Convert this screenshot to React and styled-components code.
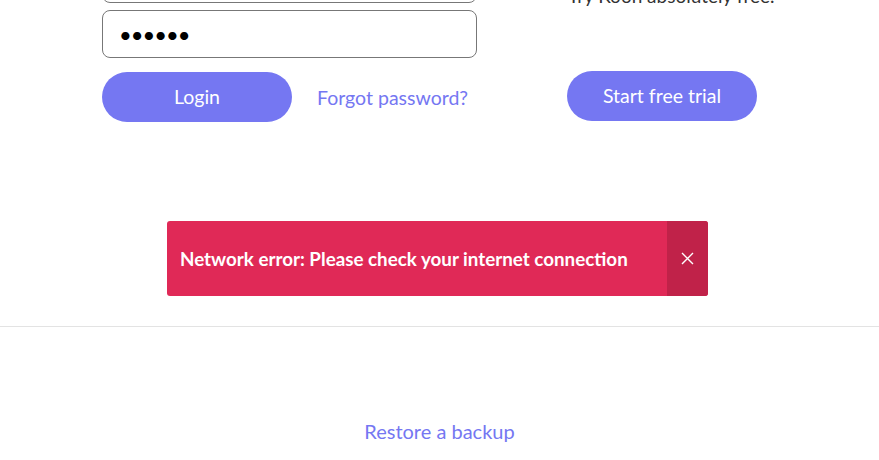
import React from 'react';
import styled, { createGlobalStyle } from 'styled-components';

const GlobalStyle = createGlobalStyle`
  html, body {
    margin: 0;
    padding: 0;
    background: #fff;
    font-family: Lato, "Open Sans", sans-serif;
    overflow: hidden;
  }
`;

const Page = styled.div`
  width: 879px;
  margin-top: -45px;
`;

const Columns = styled.div`
  display: flex;
  padding-left: 102px;
  gap: 90px;
`;

const LoginColumn = styled.div`
  width: 375px;
  display: flex;
  flex-direction: column;
`;

const Input = styled.div`
  box-sizing: border-box;
  height: 48px;
  border: 1px solid #777;
  border-radius: 8px;
  display: flex;
  align-items: center;
  padding-left: 16px;
  margin-bottom: ${(p) => p.$mb || 0}px;
  font-size: 22px;
  letter-spacing: -1px;
  color: #000;
`;

const ButtonRow = styled.div`
  display: flex;
  align-items: center;
  gap: 25px;
`;

const PillButton = styled.button`
  width: 190px;
  height: 50px;
  border: none;
  border-radius: 25px;
  background: #7577f2;
  color: #fff;
  font-family: Lato, sans-serif;
  font-size: 19.5px;
  padding: 0 0 2px;
  cursor: pointer;
`;

const Link = styled.a`
  color: #7577f2;
  font-size: ${(p) => p.$size || 19.5}px;
  text-decoration: none;
`;

const TrialColumn = styled.div`
  display: flex;
  flex-direction: column;
`;

const TrialText = styled.p`
  margin: 27px 0 0 1px;
  font-size: 19px;
  line-height: 28px;
  color: #333;
`;

const TrialButton = styled(PillButton)`
  margin-top: 61px;
`;

const ErrorWrap = styled.div`
  display: flex;
  justify-content: center;
  margin-top: 99px;
  padding-right: 4px;
`;

const ErrorBanner = styled.div`
  width: 541px;
  height: 75px;
  display: flex;
  border-radius: 3px;
  overflow: hidden;
  background: #e02957;
`;

const ErrorText = styled.div`
  flex: 1;
  display: flex;
  align-items: center;
  padding-left: 13px;
  font-size: 18.8px;
  font-weight: 700;
  color: #fff;
  white-space: nowrap;
`;

const CloseButton = styled.div`
  width: 41px;
  background: #c02249;
  display: flex;
  align-items: center;
  justify-content: center;
`;

const Divider = styled.hr`
  margin: 30px 0 0;
  border: none;
  border-top: 1px solid #e3e3e3;
`;

const Footer = styled.div`
  display: flex;
  justify-content: center;
  padding-top: 92px;
`;

export default function App() {
  return (
    <>
      <GlobalStyle />
      <Page>
        <Columns>
          <LoginColumn>
            <Input $mb={7} />
            <Input $mb={14}>••••••</Input>
            <ButtonRow>
              <PillButton>Login</PillButton>
              <Link href="#">Forgot password?</Link>
            </ButtonRow>
          </LoginColumn>
          <TrialColumn>
            <TrialText>Try Kooh absolutely free.</TrialText>
            <TrialButton>Start free trial</TrialButton>
          </TrialColumn>
        </Columns>
        <ErrorWrap>
          <ErrorBanner>
            <ErrorText>Network error: Please check your internet connection</ErrorText>
            <CloseButton>
              <svg width="13" height="13" viewBox="0 0 13 13">
                <path d="M1 1L12 12M12 1L1 12" stroke="#fff" strokeWidth="1.4" />
              </svg>
            </CloseButton>
          </ErrorBanner>
        </ErrorWrap>
        <Divider />
        <Footer>
          <Link href="#" $size={20}>Restore a backup</Link>
        </Footer>
      </Page>
    </>
  );
}
